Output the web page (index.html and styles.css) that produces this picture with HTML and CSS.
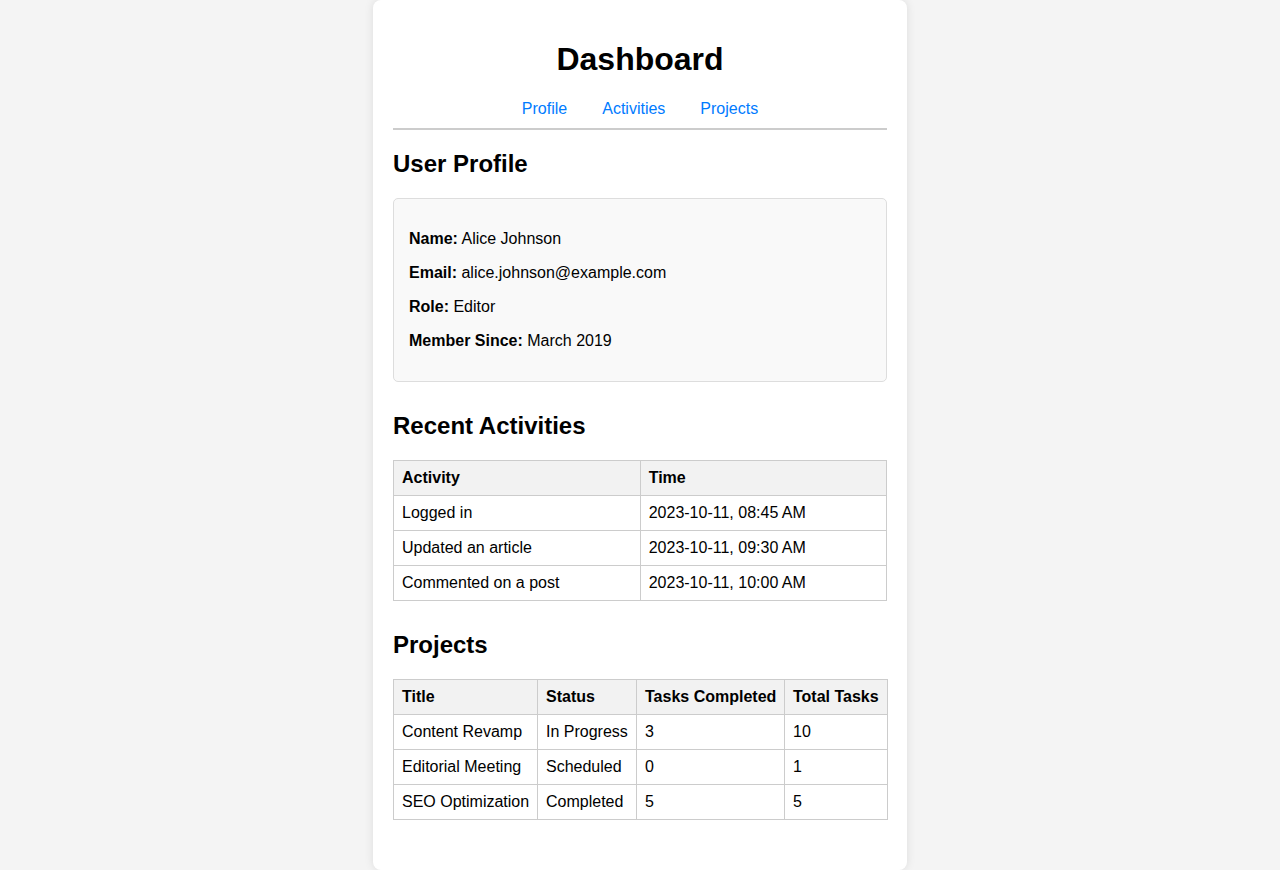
FILE: index.html
```html
<!DOCTYPE html>
<html lang="en">
<head>
<meta charset="utf-8">
<title>Dashboard</title>
<link rel="stylesheet" href="styles.css">
</head>
<body>
<div class="container">
  <h1 class="title">Dashboard</h1>
  <nav class="nav">
    <a href="#profile">Profile</a>
    <a href="#activities">Activities</a>
    <a href="#projects">Projects</a>
  </nav>

  <section class="section" id="profile">
    <h2 class="section-title">User Profile</h2>
    <div class="profile-card">
      <p><strong>Name:</strong> Alice Johnson</p>
      <p><strong>Email:</strong> alice.johnson@example.com</p>
      <p><strong>Role:</strong> Editor</p>
      <p><strong>Member Since:</strong> March 2019</p>
    </div>
  </section>

  <section class="section" id="activities">
    <h2 class="section-title">Recent Activities</h2>
    <table class="data-table">
      <thead>
        <tr><th>Activity</th><th>Time</th></tr>
      </thead>
      <tbody>
        <tr><td>Logged in</td><td>2023-10-11, 08:45 AM</td></tr>
        <tr><td>Updated an article</td><td>2023-10-11, 09:30 AM</td></tr>
        <tr><td>Commented on a post</td><td>2023-10-11, 10:00 AM</td></tr>
      </tbody>
    </table>
  </section>

  <section class="section" id="projects">
    <h2 class="section-title">Projects</h2>
    <table class="data-table projects-table">
      <colgroup>
        <col class="col-title">
        <col class="col-status">
        <col class="col-done">
        <col class="col-total">
      </colgroup>
      <thead>
        <tr><th>Title</th><th>Status</th><th>Tasks Completed</th><th>Total Tasks</th></tr>
      </thead>
      <tbody>
        <tr><td>Content Revamp</td><td>In Progress</td><td>3</td><td>10</td></tr>
        <tr><td>Editorial Meeting</td><td>Scheduled</td><td>0</td><td>1</td></tr>
        <tr><td>SEO Optimization</td><td>Completed</td><td>5</td><td>5</td></tr>
      </tbody>
    </table>
  </section>
</div>
</body>
</html>
```

FILE: styles.css
```css
html, body {
  margin: 0;
  padding: 0;
}

body {
  background: #f4f4f4;
  font-family: "Liberation Sans", Arial, sans-serif;
  font-size: 16px;
  color: #000;
}

.container {
  width: 494px;
  margin: 0 auto;
  padding: 20px;
  background: #fff;
  border-radius: 8px;
  box-shadow: 0 0 10px rgba(0, 0, 0, 0.1);
}

.title {
  text-align: center;
  font-size: 32px;
  margin: 21.44px 0;
}

.nav {
  display: flex;
  justify-content: center;
  gap: 35px;
  padding-bottom: 10px;
  border-bottom: 2px solid #ccc;
}

.nav a {
  color: #007bff;
  text-decoration: none;
}

.section {
  margin-bottom: 30px;
}

.section-title {
  font-size: 24px;
  margin: 19.92px 0;
}

.section + .section .section-title {
  margin-top: 30px;
}

.profile-card {
  background: #f9f9f9;
  border: 1px solid #ddd;
  border-radius: 5px;
  padding: 15px;
}

.profile-card p {
  margin: 16px 0;
}

.data-table {
  width: 100%;
  border-collapse: collapse;
}

.data-table th,
.data-table td {
  border: 1px solid #ccc;
  padding: 8px;
  text-align: left;
  white-space: nowrap;
}

.data-table th {
  background: #f2f2f2;
  font-weight: bold;
}

.projects-table {
  table-layout: fixed;
}

.col-title { width: 144px; }
.col-status { width: 99px; }
.col-done { width: 148px; }
.col-total { width: 103px; }
```
